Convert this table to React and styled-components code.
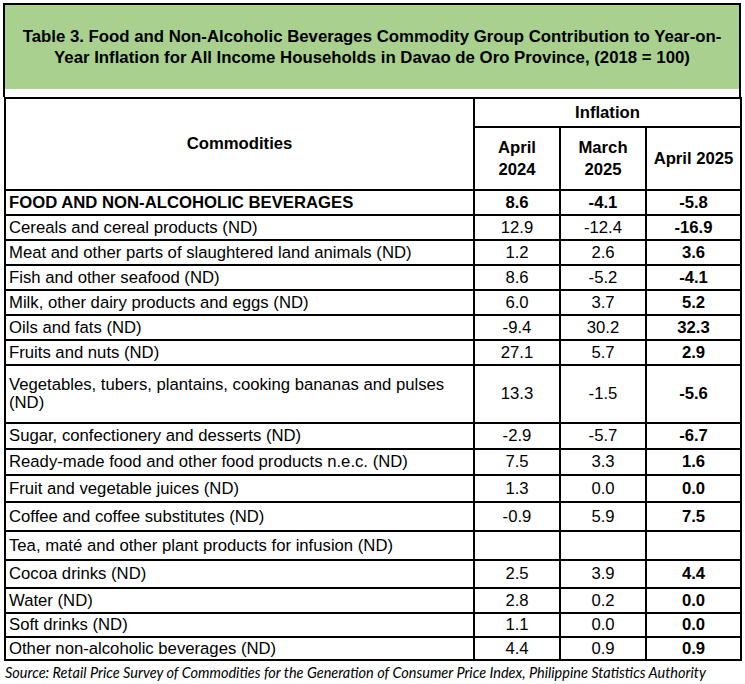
import styled, { createGlobalStyle } from "styled-components"

const GlobalStyle = createGlobalStyle`
body {
    margin: 0;
    background: #FFFFFF;
    font-family: "Liberation Sans", Arial, sans-serif;
    color: #000000;
}
`

// h = distance between row lines in the sheet
const rows = [
    { name: "FOOD AND NON-ALCOHOLIC BEVERAGES", a: "8.6", b: "-4.1", c: "-5.8", head: true, h: 25 },
    { name: "Cereals and cereal products (ND)", a: "12.9", b: "-12.4", c: "-16.9", h: 25 },
    { name: "Meat and other parts of slaughtered land animals (ND)", a: "1.2", b: "2.6", c: "3.6", h: 25 },
    { name: "Fish and other seafood (ND)", a: "8.6", b: "-5.2", c: "-4.1", h: 25 },
    { name: "Milk, other dairy products and eggs (ND)", a: "6.0", b: "3.7", c: "5.2", h: 25 },
    { name: "Oils and fats (ND)", a: "-9.4", b: "30.2", c: "32.3", h: 25 },
    { name: "Fruits and nuts (ND)", a: "27.1", b: "5.7", c: "2.9", h: 25 },
    { name: ["Vegetables, tubers, plantains, cooking bananas and pulses", "(ND)"], a: "13.3", b: "-1.5", c: "-5.6", h: 58 },
    { name: "Sugar, confectionery and desserts (ND)", a: "-2.9", b: "-5.7", c: "-6.7", h: 26 },
    { name: "Ready-made food and other food products n.e.c. (ND)", a: "7.5", b: "3.3", c: "1.6", h: 26 },
    { name: "Fruit and vegetable juices (ND)", a: "1.3", b: "0.0", c: "0.0", h: 27 },
    { name: "Coffee and coffee substitutes (ND)", a: "-0.9", b: "5.9", c: "7.5", h: 29 },
    { name: "Tea, maté and other plant products for infusion (ND)", a: "", b: "", c: "", h: 29 },
    { name: "Cocoa drinks (ND)", a: "2.5", b: "3.9", c: "4.4", h: 28 },
    { name: "Water (ND)", a: "2.8", b: "0.2", c: "0.0", h: 25 },
    { name: "Soft drinks (ND)", a: "1.1", b: "0.0", c: "0.0", h: 24 },
    { name: "Other non-alcoholic beverages (ND)", a: "4.4", b: "0.9", c: "0.9", h: 23 },
]

export default function App(){
    return (<Page>
        <GlobalStyle />
        <TitleBox>
            <Title>
                Table 3. Food and Non-Alcoholic Beverages Commodity Group Contribution to Year-on-<br />
                Year Inflation for All Income Households in Davao de Oro Province, (2018 = 100)
            </Title>
        </TitleBox>
        <Table>
            <colgroup>
                <col style={{width: 469}} />
                <col style={{width: 86}} />
                <col style={{width: 86}} />
                <col style={{width: 95}} />
            </colgroup>
            <thead>
                <tr>
                    <HeadCell rowSpan={2}>Commodities</HeadCell>
                    <HeadCell colSpan={3} $h={29}>Inflation</HeadCell>
                </tr>
                <tr>
                    <HeadCell $h={63}>April<br />2024</HeadCell>
                    <HeadCell $h={63}>March<br />2025</HeadCell>
                    <HeadCell $h={63}>April 2025</HeadCell>
                </tr>
            </thead>
            <tbody>
                {rows.map((r, i) => (
                    <tr key={i}>
                        <NameCell $bold={r.head} $h={r.h}>
                            {Array.isArray(r.name) ? <>{r.name[0]}<br />{r.name[1]}</> : r.name}
                        </NameCell>
                        <NumCell $bold={r.head}>{r.a}</NumCell>
                        <NumCell $bold={r.head}>{r.b}</NumCell>
                        <NumCell $bold>{r.c}</NumCell>
                    </tr>
                ))}
            </tbody>
        </Table>
        <Source>Source: Retail Price Survey of Commodities for the Generation of Consumer Price Index, Philippine Statistics Authority</Source>
    </Page>);
}

const Page = styled.div`
padding: 3px 0 0 3px;
`

const TitleBox = styled.div`
box-sizing: border-box;
width: 738px;
border: 2px solid #000000;
border-bottom: none;
padding-bottom: 8px;
`

const Title = styled.div`
display: flex;
align-items: center;
justify-content: center;
height: 84px;

background: #A9D08E;

font-weight: 700;
font-size: 16.8px;
line-height: 21px;
text-align: center;
`

const Table = styled.table`
border-collapse: collapse;
table-layout: fixed;
width: 736px;
margin-left: 1px;
border: 2px solid #000000;
font-size: 16.7px;
`

/* cell heights: line distance minus the two half borders */
const HeadCell = styled.th`
border: 2px solid #000000;
padding: 0 4px;
height: ${p => p.$h ? (p.$h - 2) + "px" : "auto"};

font-weight: 700;
line-height: 22px;
text-align: center;
vertical-align: middle;
`

const NameCell = styled.td`
border: 2px solid #000000;
padding: 0 3px;
height: ${p => p.$h - 2}px;

font-weight: ${p => p.$bold ? 700 : 400};
line-height: 18px;
text-align: left;
vertical-align: middle;
white-space: nowrap;
`

const NumCell = styled.td`
border: 2px solid #000000;
padding: 0 4px;

font-weight: ${p => p.$bold ? 700 : 400};
line-height: 18px;
text-align: center;
vertical-align: middle;
`

const Source = styled.div`
margin-top: 3px;
padding-left: 2px;

font-family: Lato, "Open Sans", sans-serif;
font-style: italic;
font-size: 14.5px;
line-height: 17px;
`
